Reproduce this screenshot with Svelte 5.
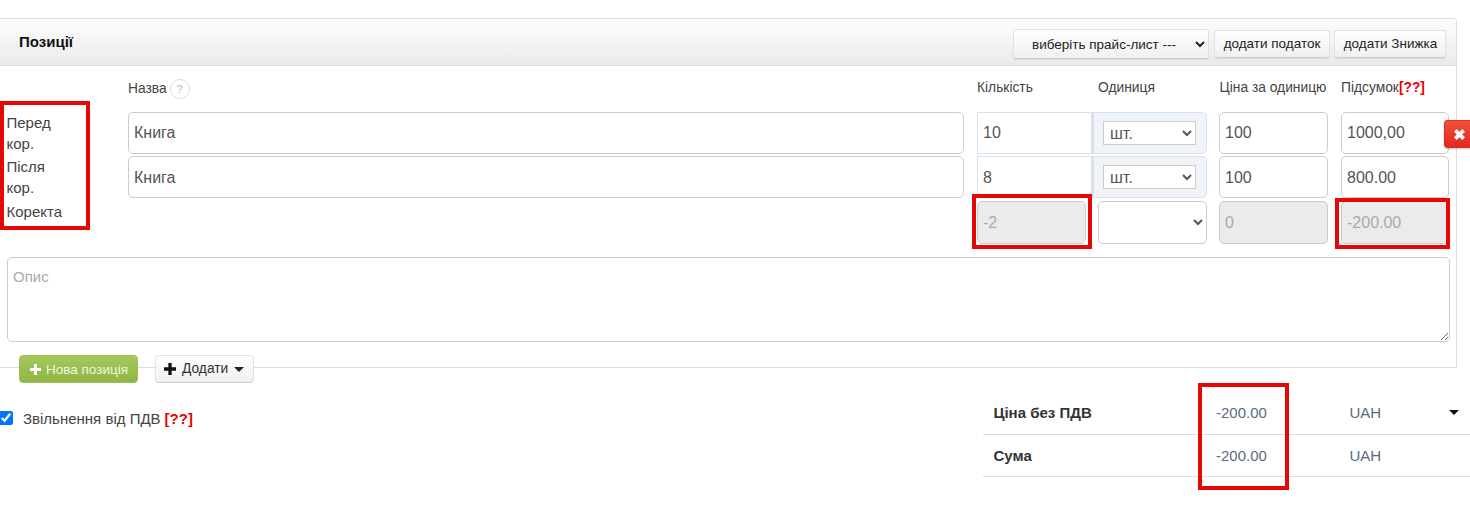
<script>
  const rows = [
    { name: 'Книга', qty: '10', price: '100', total: '1000,00' },
    { name: 'Книга', qty: '8', price: '100', total: '800.00' }
  ];
</script>

<div class="panel">
  <div class="panel-head">
    <h3>Позиції</h3>
    <div class="head-actions">
      <select class="pricelist">
        <option>виберіть прайс-лист ---</option>
      </select>
      <button class="btn-light tax">додати податок</button>
      <button class="btn-light disc">додати Знижка</button>
    </div>
  </div>

  <div class="panel-body">
    <div class="col-labels">
      <span class="name-label">Назва <i class="help">?</i></span>
      <span class="qty-label">Кількість</span>
      <span class="unit-label">Одиниця</span>
      <span class="price-label">Ціна за одиницю</span>
      <span class="total-label">Підсумок<b class="warn">[??]</b></span>
    </div>

    <div class="lines">
      <div class="side-labels">
        <p>Перед<br />кор.</p>
        <p>Після<br />кор.</p>
        <p>Коректа</p>
      </div>
      <div class="grid">
        {#each rows as r}
          <div class="row">
            <input class="field name" value={r.name} />
            <div class="qty-group">
              <input class="field qty" value={r.qty} />
              <div class="unit-addon">
                <select class="unit"><option>шт.</option></select>
              </div>
            </div>
            <input class="field" value={r.price} />
            <input class="field" value={r.total} />
          </div>
        {/each}
        <div class="row last">
          <span></span>
          <div class="qty-split">
            <input class="field" value="-2" disabled />
            <select class="field empty"><option></option></select>
          </div>
          <input class="field" value="0" disabled />
          <input class="field" value="-200.00" disabled />
        </div>
      </div>
    </div>

    <textarea placeholder="Опис"></textarea>
  </div>

  <div class="panel-foot">
    <button class="btn-green"><svg width="11" height="11" viewBox="0 0 11 11"><path d="M4 0h3v4h4v3H7v4H4V7H0V4h4z" fill="#fff" /></svg>Нова позиція</button>
    <button class="btn-add"><svg width="12" height="12" viewBox="0 0 11 11"><path d="M4 0h3v4h4v3H7v4H4V7H0V4h4z" fill="#111" /></svg><span>Додати</span><span class="caret"></span></button>
  </div>

  <button class="remove" aria-label="Видалити"><svg width="11" height="11" viewBox="0 0 10 10"><path d="M2.4 0 5 2.6 7.6 0 10 2.4 7.4 5 10 7.6 7.6 10 5 7.4 2.4 10 0 7.6 2.6 5 0 2.4z" fill="#fff" /></svg></button>
</div>

<div class="bottom">
  <label class="vat"><input type="checkbox" checked /> Звільнення від ПДВ <b class="warn">[??]</b></label>
  <div class="totals">
    <div class="t-row first">
      <strong>Ціна без ПДВ</strong><span class="amt">-200.00</span><span class="cur">UAH</span><span class="caret dark"></span>
    </div>
    <div class="t-row">
      <strong>Сума</strong><span class="amt">-200.00</span><span class="cur">UAH</span>
    </div>
  </div>
</div>

<!-- annotation frames drawn over the screenshot -->
<div class="mark m1"></div>
<div class="mark m2"></div>
<div class="mark m3"></div>
<div class="mark m4"></div>

<style>
  :global(body) {
    background: #fff;
    color: #333;
    font-family: "Liberation Sans", Arial, sans-serif;
    font-size: 14px;
    overflow: hidden;
  }

  .panel {
    position: relative;
    box-sizing: border-box;
    width: 1457px;
    height: 350px;
    margin-top: 18px;
    border: 1px solid #ddd;
    border-left: 0;
    border-radius: 0 4px 0 0;
  }

  .panel-head {
    box-sizing: border-box;
    height: 47px;
    display: flex;
    align-items: flex-start;
    justify-content: space-between;
    padding: 10px 10px 0 19px;
    background: linear-gradient(#fdfdfd, #eaeaea);
    border-bottom: 1px solid #ddd;
    border-radius: 0 4px 0 0;
  }

  h3 {
    margin: 4px 0 0;
    font-size: 15px;
    font-weight: bold;
    color: #111;
  }

  .head-actions {
    display: flex;
    gap: 5px;
  }

  .pricelist,
  .btn-light {
    font-family: inherit;
    font-size: 13.5px;
    color: #222;
    border: 1px solid #e2e2e2;
    border-bottom-color: #ccc;
    border-radius: 3px;
    background: linear-gradient(#fff, #f0f0f0);
    box-shadow: 0 1px 1px rgba(0, 0, 0, 0.08);
  }

  .pricelist {
    width: 196px;
    height: 30px;
    padding-left: 14px;
  }

  .btn-light {
    height: 28px;
    margin-top: 1px;
    padding: 0 0 2px;
  }

  .tax { width: 116px; }
  .disc { width: 112px; margin-left: -1px; padding-left: 1px; }

  .panel-body {
    height: 277px;
    padding-left: 7px;
  }

  .col-labels {
    position: relative;
    height: 46px;
    color: #444;
    font-size: 13.8px;
  }

  .col-labels span {
    position: absolute;
    top: 14px;
    white-space: nowrap;
  }

  .col-labels .name-label { left: 121px; top: 13px; }
  .qty-label { left: 970px; }
  .unit-label { left: 1091px; }
  .price-label { left: 1212.5px; }
  .total-label { left: 1334px; }

  .help {
    display: inline-block;
    box-sizing: border-box;
    width: 20px;
    height: 20px;
    margin-left: -1px;
    border: 1px solid #ddd;
    border-radius: 50%;
    color: #bbb;
    font-size: 11px;
    font-style: normal;
    line-height: 18px;
    text-align: center;
    vertical-align: 0;
  }

  .warn {
    color: #f00000;
    font-weight: bold;
  }

  .lines {
    display: flex;
    height: 145px;
    margin-left: -7px;
  }

  .side-labels {
    box-sizing: border-box;
    width: 128px;
    padding: 0 0 0 6.5px;
    font-size: 15px;
    line-height: 21px;
    color: #444;
  }

  .side-labels p {
    margin: 0 0 2px;
  }

  .side-labels p:nth-child(2) {
    margin-bottom: 3px;
  }

  .grid {
    display: flex;
    flex-direction: column;
    gap: 2px;
  }

  .row {
    display: grid;
    grid-template-columns: 836px 229px 109px 108px;
    column-gap: 13px;
    height: 42px;
  }

  .row:nth-child(2) .field {
    padding-top: 2px;
  }

  .row.last {
    height: 43px;
    margin-top: 1px;
  }

  .field {
    box-sizing: border-box;
    width: 100%;
    height: 100%;
    min-width: 0;
    padding: 0 5px;
    font-family: inherit;
    font-size: 16px;
    color: #555;
    background: #fff;
    border: 1px solid #ccc;
    border-radius: 5px;
    outline: none;
  }

  .field:disabled {
    background: #ebebeb;
    color: #aaa;
    opacity: 1;
  }

  .qty-group {
    display: grid;
    grid-template-columns: 115px 115px;
  }

  .qty {
    border-color: #d5e3ee;
    border-radius: 0;
  }

  .unit-addon {
    display: flex;
    align-items: center;
    box-sizing: border-box;
    padding-left: 9px;
    background: #f0f4f9;
    border: 1px solid #d5e3ee;
    border-left-width: 2px;
    border-radius: 0 5px 5px 0;
  }

  .unit {
    width: 93px;
    height: 24px;
    font-family: inherit;
    font-size: 16px;
    color: #555;
    background: #fff;
    border: 1px solid #ccc;
    border-radius: 0;
    padding-left: 2px;
  }

  .qty-split {
    display: grid;
    grid-template-columns: 109px 109px;
    column-gap: 12px;
  }

  .empty {
    padding: 0;
  }

  textarea {
    box-sizing: border-box;
    display: block;
    width: 1443px;
    height: 85px;
    margin-top: 0;
    padding: 10px 5px;
    font-family: inherit;
    font-size: 15px;
    color: #555;
    border: 1px solid #ccc;
    border-radius: 5px;
    outline: none;
  }

  textarea::placeholder {
    color: #aaa;
  }

  .panel-foot {
    display: flex;
    gap: 17px;
    padding-left: 19px;
    margin-top: 12px;
  }

  .panel-foot button {
    display: flex;
    align-items: center;
    box-sizing: border-box;
    height: 28px;
    font-family: inherit;
    font-size: 14px;
    border-radius: 4px;
  }

  .btn-green {
    width: 119px;
    padding: 0 0 0 10px;
    gap: 5px;
    color: #eef5e0;
    background: linear-gradient(#a5c95a, #8fb644);
    border: 1px solid #9bbf50;
    font-size: 13.5px !important;
  }

  .btn-add {
    width: 99px;
    padding: 0 0 1px 8px;
    gap: 6px;
    color: #333;
    background: linear-gradient(#fff, #f0f0f0);
    border: 1px solid #e2e2e2;
    border-bottom-color: #ccc;
    font-size: 13.8px !important;
  }

  .caret {
    display: inline-block;
    width: 0;
    height: 0;
    border: 5px solid transparent;
    border-top-color: #222;
    border-bottom: 0;
  }

  .btn-add .caret {
    margin-top: 2px;
  }

  .remove {
    position: absolute;
    left: 1444px;
    top: 101px;
    width: 34px;
    height: 28px;
    padding: 0 0 0 9px;
    display: flex;
    align-items: center;
    background: linear-gradient(#f0503a, #e0281f);
    border: 1px solid #d8331f;
    border-radius: 3px;
    box-shadow: 0 1px 2px rgba(0, 0, 0, 0.25);
  }

  .bottom {
    display: flex;
    justify-content: space-between;
    margin-top: 25px;
  }

  .vat {
    display: flex;
    align-items: center;
    gap: 4px;
    height: 20px;
    margin-top: 15px;
    font-size: 15px;
    color: #444;
  }

  .vat input {
    width: 14px;
    height: 14px;
    margin: 0 6px 0 -1px;
    accent-color: #0075ff;
  }

  .totals {
    width: 487px;
  }

  .t-row {
    position: relative;
    box-sizing: border-box;
    display: flex;
    align-items: center;
    height: 42px;
    padding-left: 10.5px;
    border-bottom: 1px solid #ddd;
    font-size: 15px;
  }

  .t-row.first {
    padding-bottom: 2px;
  }

  .t-row strong {
    width: 222.5px;
    color: #333;
  }

  .amt {
    width: 133.5px;
    color: #5a6b80;
  }

  .cur {
    color: #5a6b80;
  }

  .dark {
    position: absolute;
    right: 11px;
    top: 17px;
    border-top-color: #111;
  }

  .mark {
    position: absolute;
    box-sizing: border-box;
    border: 4px solid #e60808;
    pointer-events: none;
  }

  .m1 { left: 0; top: 101px; width: 90px; height: 129px; }
  .m2 { left: 972px; top: 194px; width: 120px; height: 55px; }
  .m3 { left: 1335px; top: 198px; width: 115px; height: 51px; }
  .m4 { left: 1198px; top: 383px; width: 91px; height: 107px; }
</style>
